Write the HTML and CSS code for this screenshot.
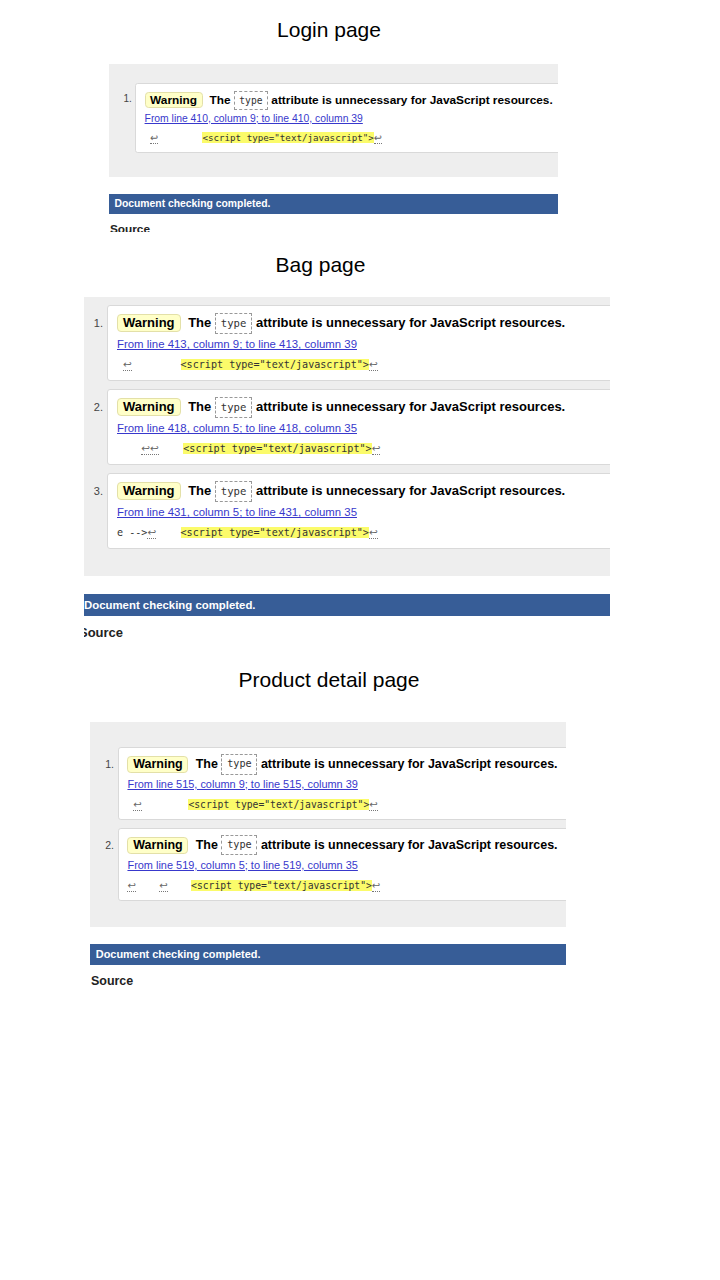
FILE: index.html
```html
<!DOCTYPE html>
<html lang="en">
<head>
<meta charset="utf-8">
<title>Validator warnings</title>
<link rel="stylesheet" href="styles.css">
</head>
<body>
<section class="part part-login">
  <h2 class="caption">Login page</h2>
  <div class="frame">
    <div class="shot">
      <ol class="panel">
        <li class="item">
          <span class="num">1.</span>
          <div class="card">
            <p class="msg"><strong class="badge">Warning</strong> The <code class="attr">type</code> attribute is unnecessary for JavaScript resources.</p>
            <p class="loc"><a href="#">From line 410, column 9; to line 410, column 39</a></p>
            <p class="extract"> <span class="lf">↩</span>        <mark class="hl">&lt;script type="text/javascript"&gt;</mark><span class="lf">↩</span></p>
          </div>
        </li>
      </ol>
      <div class="status">Document checking completed.</div>
      <h3 class="source">Source</h3>
    </div>
  </div>
</section>

<section class="part part-bag">
  <h2 class="caption">Bag page</h2>
  <div class="frame">
    <div class="shot">
      <ol class="panel">
        <li class="item">
          <span class="num">1.</span>
          <div class="card">
            <p class="msg"><strong class="badge">Warning</strong> The <code class="attr">type</code> attribute is unnecessary for JavaScript resources.</p>
            <p class="loc"><a href="#">From line 413, column 9; to line 413, column 39</a></p>
            <p class="extract"> <span class="lf">↩</span>        <mark class="hl">&lt;script type="text/javascript"&gt;</mark><span class="lf">↩</span></p>
          </div>
        </li>
        <li class="item">
          <span class="num">2.</span>
          <div class="card">
            <p class="msg"><strong class="badge">Warning</strong> The <code class="attr">type</code> attribute is unnecessary for JavaScript resources.</p>
            <p class="loc"><a href="#">From line 418, column 5; to line 418, column 35</a></p>
            <p class="extract">    <span class="lf">↩↩</span>    <mark class="hl">&lt;script type="text/javascript"&gt;</mark><span class="lf">↩</span></p>
          </div>
        </li>
        <li class="item">
          <span class="num">3.</span>
          <div class="card">
            <p class="msg"><strong class="badge">Warning</strong> The <code class="attr">type</code> attribute is unnecessary for JavaScript resources.</p>
            <p class="loc"><a href="#">From line 431, column 5; to line 431, column 35</a></p>
            <p class="extract">e --&gt;<span class="lf">↩</span>    <mark class="hl">&lt;script type="text/javascript"&gt;</mark><span class="lf">↩</span></p>
          </div>
        </li>
      </ol>
      <div class="status">Document checking completed.</div>
      <h3 class="source">Source</h3>
    </div>
  </div>
</section>

<section class="part part-product">
  <h2 class="caption">Product detail page</h2>
  <div class="frame">
    <div class="shot">
      <ol class="panel">
        <li class="item">
          <span class="num">1.</span>
          <div class="card">
            <p class="msg"><strong class="badge">Warning</strong> The <code class="attr">type</code> attribute is unnecessary for JavaScript resources.</p>
            <p class="loc"><a href="#">From line 515, column 9; to line 515, column 39</a></p>
            <p class="extract"> <span class="lf">↩</span>        <mark class="hl">&lt;script type="text/javascript"&gt;</mark><span class="lf">↩</span></p>
          </div>
        </li>
        <li class="item">
          <span class="num">2.</span>
          <div class="card">
            <p class="msg"><strong class="badge">Warning</strong> The <code class="attr">type</code> attribute is unnecessary for JavaScript resources.</p>
            <p class="loc"><a href="#">From line 519, column 5; to line 519, column 35</a></p>
            <p class="extract"><span class="lf">↩</span>    <span class="lf">↩</span>    <mark class="hl">&lt;script type="text/javascript"&gt;</mark><span class="lf">↩</span></p>
          </div>
        </li>
      </ol>
      <div class="status">Document checking completed.</div>
      <h3 class="source">Source</h3>
    </div>
  </div>
</section>
</body>
</html>
```

FILE: styles.css
```css
* { box-sizing: border-box; }

html, body {
  margin: 0;
  padding: 0;
  background: #fff;
}

body {
  width: 720px;
  height: 1280px;
  overflow: hidden;
  font-family: "Liberation Sans", Arial, sans-serif;
  color: #000;
}

.caption {
  margin: 0;
  width: 658px;
  text-align: center;
  font-weight: normal;
  font-size: 21px;
  line-height: 26px;
  color: #000;
}

.frame { overflow: hidden; }

.part-login .caption { margin-top: 17px; }
.part-login .frame { margin: 21px 0 0 109px; width: 449px; height: 168px; }
.part-login .shot { zoom: 0.91; }
.part-login .panel { padding-top: 21px; }

.part-bag .caption { width: 641px; margin-top: 20px; }
.part-bag .frame { margin: 19px 0 0 84px; width: 526px; }
.part-bag .shot { margin-left: -6px; }

.part-product .caption { margin-top: 25px; }
.part-product .frame { margin: 29px 0 0 90px; width: 476px; }
.part-product .shot { zoom: 0.96; }
.part-product .panel { padding-top: 26px; }

.panel {
  list-style: none;
  margin: 0;
  padding: 8px 0 27px 0;
  background: #eeeeee;
}

.item {
  display: flex;
  align-items: flex-start;
}

.item + .item { margin-top: 8px; }

.num {
  flex: 0 0 29px;
  padding: 7px 4px 0 0;
  text-align: right;
  font-size: 11px;
  line-height: 22px;
  color: #444;
}

.card {
  flex: 1 0 auto;
  margin-right: -40px;
  background: #fff;
  border: 1px solid #d9d9d9;
  border-radius: 3px;
  padding: 6px 10px 7px 9px;
}

.msg {
  margin: 0;
  font-size: 13px;
  font-weight: bold;
  line-height: 22px;
  white-space: nowrap;
}

.badge {
  display: inline-block;
  padding: 0 5px;
  margin-right: 4px;
  border: 1px solid #e3e0a8;
  border-radius: 4px;
  background: #ffffc8;
  line-height: 16px;
}

.attr {
  display: inline-block;
  vertical-align: middle;
  padding: 1px 5px;
  border: 1px dashed #999;
  font-family: "DejaVu Sans Mono", "Liberation Mono", monospace;
  font-weight: normal;
  font-size: 10.6px;
  line-height: 17px;
  color: #333;
}

.loc {
  margin: 3px 0 0;
  font-size: 11.4px;
  line-height: 14px;
  white-space: nowrap;
}

.loc a {
  color: #3838cc;
  text-decoration: underline;
}

.extract {
  margin: 6px 0 0;
  height: 16px;
  font-family: "DejaVu Sans Mono", "Liberation Mono", monospace;
  font-size: 10.1px;
  line-height: 16px;
  white-space: pre;
  color: #333;
}

.hl {
  background: #fbfb6a;
  color: #333;
}

.lf {
  font-family: "DejaVu Sans", sans-serif;
  font-size: 10.5px;
  line-height: 1;
  color: #666;
  border-bottom: 1px dotted #777;
}

.status {
  margin-top: 18px;
  padding-left: 6px;
  background: #375d97;
  color: #fff;
  font-weight: bold;
  font-size: 11.4px;
  line-height: 22px;
  white-space: nowrap;
}

.source {
  margin: 8px 0 0;
  padding-left: 1px;
  font-size: 13px;
  line-height: 18px;
  color: #222;
}
```
